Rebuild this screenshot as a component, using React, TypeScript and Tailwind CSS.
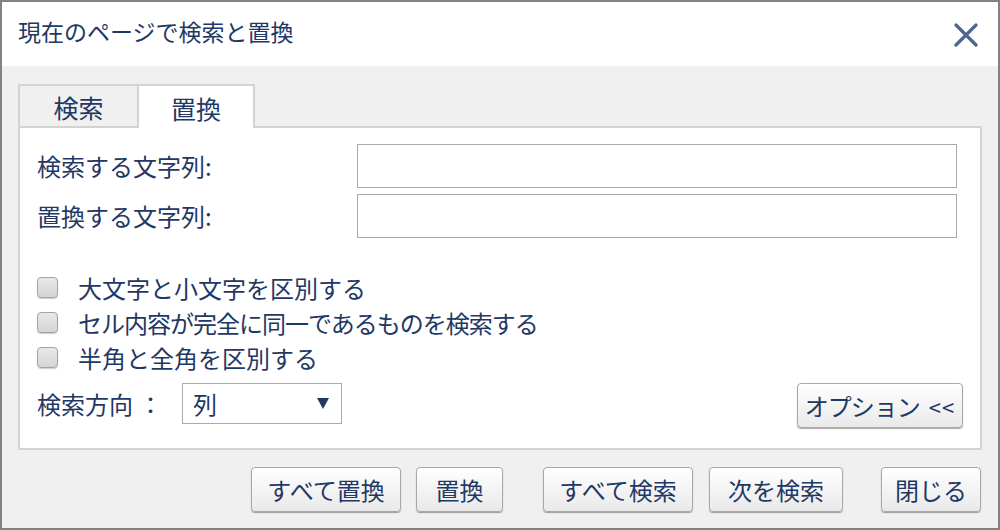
import { useState } from 'react'

function Btn({ label, w, tight, suffix }: { label: string; w: string; tight?: boolean; suffix?: string }) {
  return (
    <button
      className={`${w} ${tight ? 'tracking-[-1px]' : ''} h-[45px] shrink-0 rounded-[4px] border border-[#a8a8a8] bg-gradient-to-b from-white to-[#e9e9e9] text-[24px] leading-none text-[#1f3864] shadow-[0_1px_1px_rgba(0,0,0,0.35)]`}
    >
      {label}
      {suffix && <span className="ml-[9px] tracking-[1px] text-[22px]">{suffix}</span>}
    </button>
  )
}

function Check({ label, tight }: { label: string; tight?: boolean }) {
  const [on, setOn] = useState(false)
  return (
    <label className="flex h-[35px] items-center gap-[20px] cursor-pointer" onClick={() => setOn(!on)}>
      <span className="w-[21px] h-[21px] shrink-0 rounded-[4px] border border-[#a3a3a3] bg-gradient-to-b from-[#e8e8e8] to-[#d5d5d5] shadow-[0_1px_1px_rgba(0,0,0,0.2)]" />
      <span className={`${tight ? 'tracking-[-1px]' : ''} text-[24px] leading-[35px]`}>{label}</span>
    </label>
  )
}

export default function App() {
  return (
    <div className="w-[1000px] h-[530px] border-2 border-[#828282] flex flex-col text-[#1f3864] font-['Noto_Sans_CJK_JP','Noto_Sans',sans-serif]">
      {/* Header */}
      <div className="h-[64px] shrink-0 bg-white flex items-start justify-between pl-[16px] pr-[20px]">
        <h1 className="pt-[13px] text-[23px] leading-[32px] font-normal">現在のページで検索と置換</h1>
        <button className="mt-[21px] w-[24px] h-[24px] flex items-center justify-center">
          <svg width="24" height="24" viewBox="0 0 24 24">
            <path d="M2 2 L22 22 M22 2 L2 22" stroke="#4c6591" strokeWidth="3.2" strokeLinecap="round" />
          </svg>
        </button>
      </div>

      {/* Body */}
      <div className="flex-1 bg-[#f0f0f0] px-[16px] pt-[18px] flex flex-col">
        {/* Tabs */}
        <div className="flex h-[44px] items-stretch">
          <div className="w-[119px] border-l-2 border-t-2 border-b-2 border-[#d3d3d3] flex items-center justify-center text-[25px] leading-none pt-[2px]">
            検索
          </div>
          <div className="w-[118px] border-2 border-b-0 border-[#d3d3d3] bg-white flex items-center justify-center text-[25px] leading-none pt-[2px]">
            置換
          </div>
          <div className="flex-1 border-b-2 border-[#d3d3d3]" />
        </div>

        {/* Panel */}
        <div className="h-[322px] border-2 border-t-0 border-[#d3d3d3] bg-white pl-[17px] pr-[23px] pt-[16px] flex flex-col">
          <div className="flex items-center justify-between h-[44px]">
            <span className="text-[24px] leading-none">検索する文字列:</span>
            <input className="w-[600px] h-[44px] border border-[#a9a9a9] bg-white px-2 text-[20px] outline-none" />
          </div>
          <div className="flex items-center justify-between h-[44px] mt-[6px]">
            <span className="text-[24px] leading-none">置換する文字列:</span>
            <input className="w-[600px] h-[44px] border border-[#a9a9a9] bg-white px-2 text-[20px] outline-none" />
          </div>

          <div className="mt-[32px] flex flex-col">
            <Check label="大文字と小文字を区別する" />
            <Check label="セル内容が完全に同一であるものを検索する" tight />
            <Check label="半角と全角を区別する" />
          </div>

          <div className="mt-[8px] flex items-start">
            <span className="text-[24px] leading-[41px] w-[145px]">検索方向 ：</span>
            <div className="w-[160px] h-[41px] border border-[#a9a9a9] bg-white flex items-center justify-between pl-[10px] pr-[12px]">
              <span className="text-[24px] leading-none">列</span>
              <svg width="12" height="11" viewBox="0 0 12 11">
                <path d="M0 0 H12 L6 11 Z" fill="#1f3864" />
              </svg>
            </div>
            <div className="flex-1" />
            <Btn label="オプション" suffix="<<" w="w-[166px] -mr-[6px]" tight />
          </div>
        </div>

        {/* Footer buttons */}
        <div className="flex justify-end items-start pt-[17px]">
          <Btn label="すべて置換" w="w-[150px]" />
          <div className="w-[15px]" />
          <Btn label="置換" w="w-[87px]" />
          <div className="w-[40px]" />
          <Btn label="すべて検索" w="w-[150px]" />
          <div className="w-[16px]" />
          <Btn label="次を検索" w="w-[134px]" />
          <div className="w-[38px]" />
          <Btn label="閉じる" w="w-[100px]" />
          <div className="w-px" />
        </div>
      </div>
    </div>
  )
}
